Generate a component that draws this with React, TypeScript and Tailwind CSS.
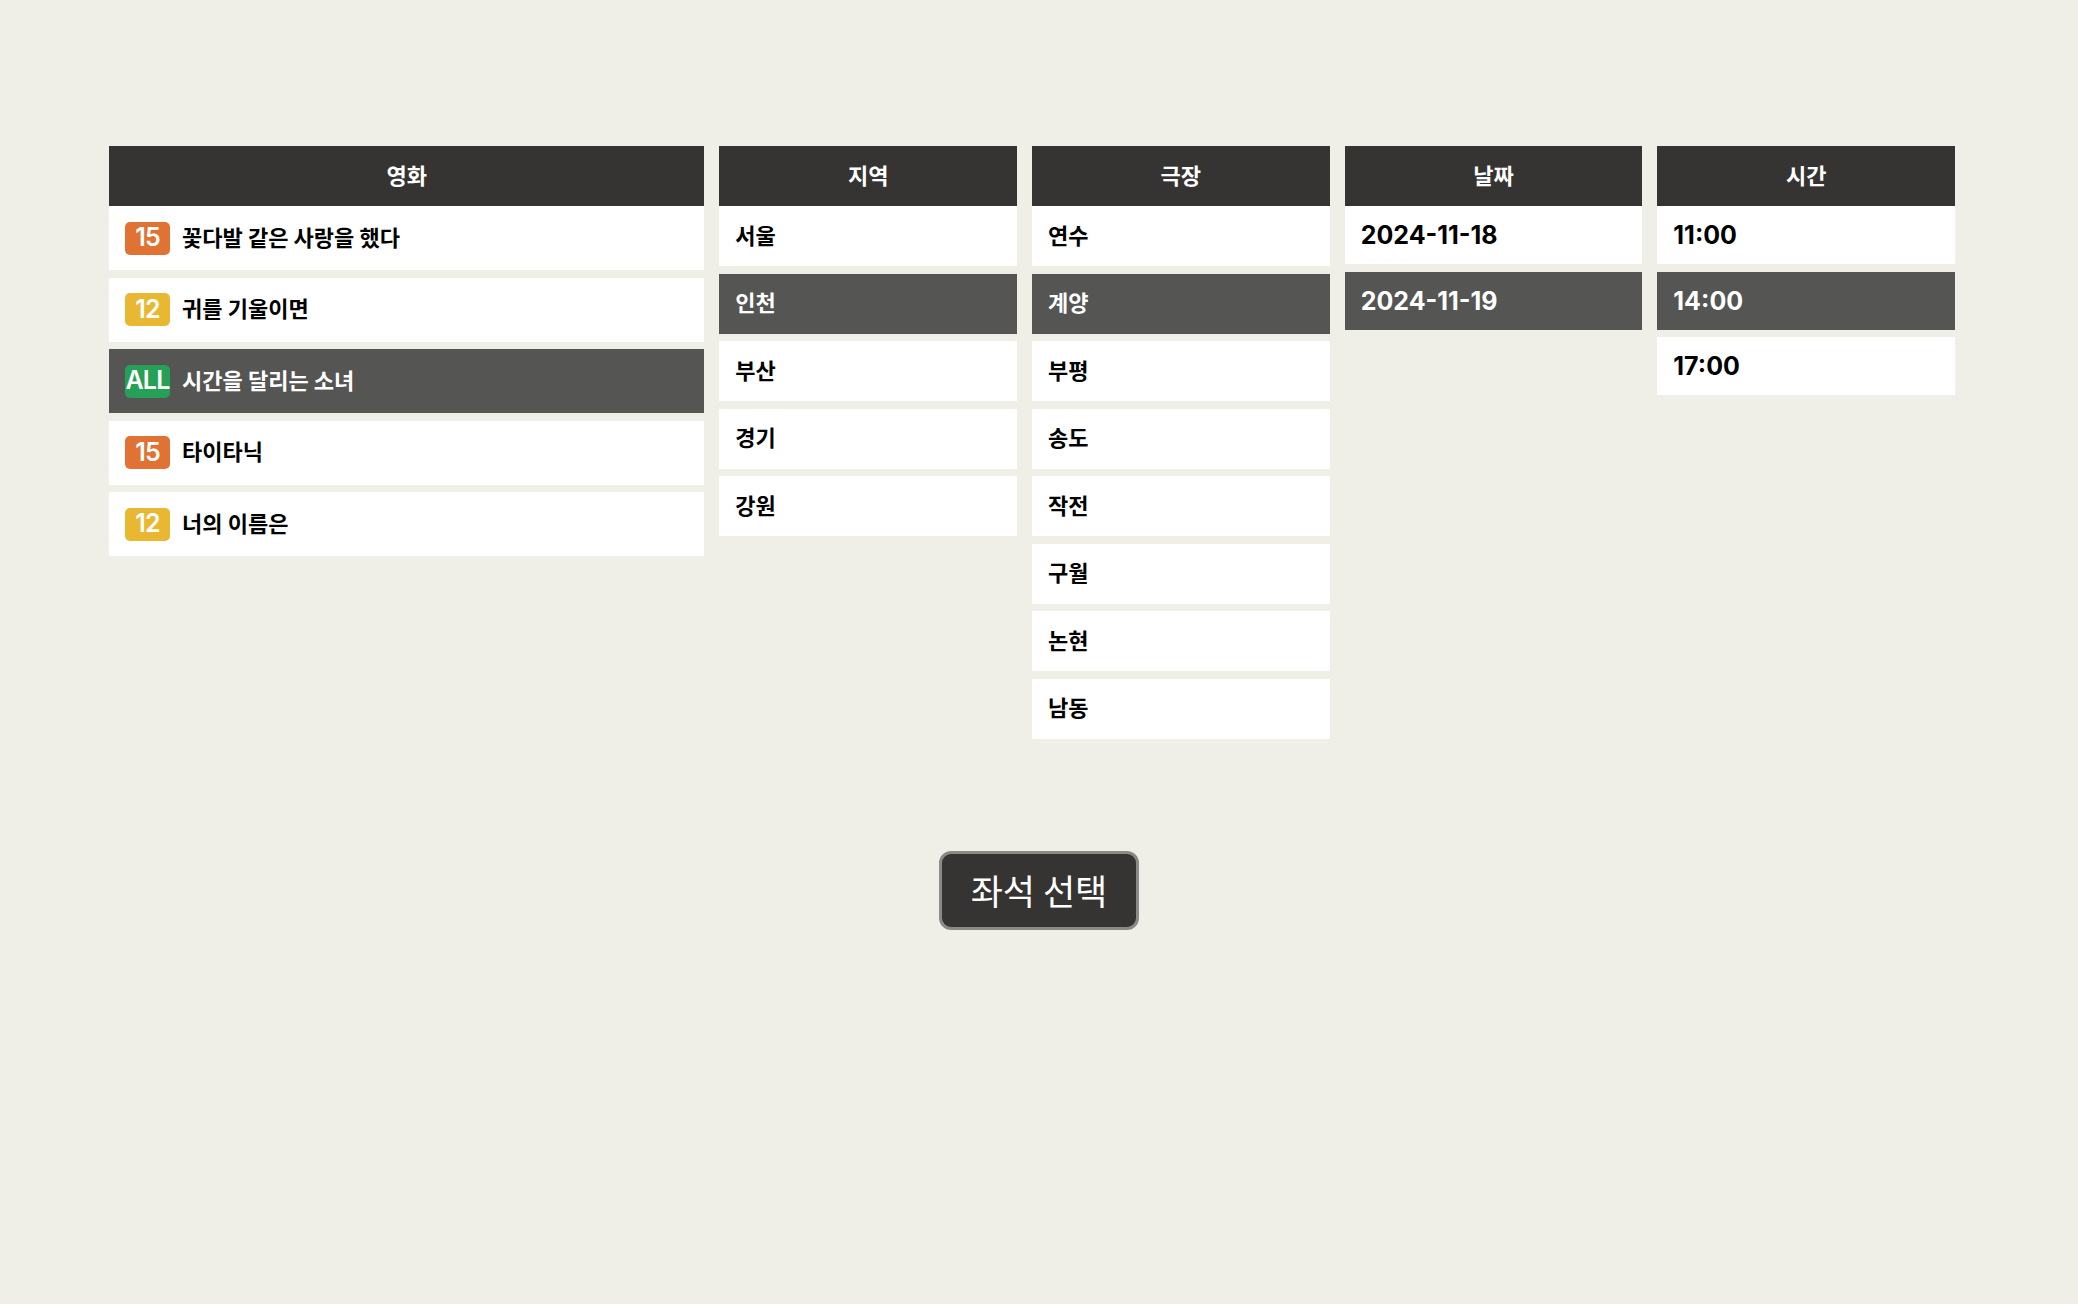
import { useState } from 'react'

type Rating = '15' | '12' | 'ALL'

interface Movie {
  title: string
  rating: Rating
}

const movies: Movie[] = [
  { title: '꽃다발 같은 사랑을 했다', rating: '15' },
  { title: '귀를 기울이면', rating: '12' },
  { title: '시간을 달리는 소녀', rating: 'ALL' },
  { title: '타이타닉', rating: '15' },
  { title: '너의 이름은', rating: '12' },
]

const regions = ['서울', '인천', '부산', '경기', '강원']
const theaters = ['연수', '계양', '부평', '송도', '작전', '구월', '논현', '남동']
const dates = ['2024-11-18', '2024-11-19']
const times = ['11:00', '14:00', '17:00']

const ratingColor: Record<Rating, string> = {
  '15': 'bg-[#e07333]',
  '12': 'bg-[#e9b832]',
  ALL: 'bg-[#25a057]',
}

const font = { fontFamily: 'Inter, "Noto Sans CJK KR", sans-serif' }

function Header({ label }: { label: string }) {
  return (
    <div className="h-[60px] flex items-center justify-center bg-[#353432] text-white text-[22px] font-bold">
      {label}
    </div>
  )
}

function Row({
  selected,
  height,
  onClick,
  children,
}: {
  selected: boolean
  height: string
  onClick: () => void
  children: React.ReactNode
}) {
  return (
    <div
      onClick={onClick}
      className={`${height} flex items-center px-4 cursor-pointer ${
        selected ? 'bg-[#555553] text-white' : 'bg-white text-black'
      }`}
    >
      {children}
    </div>
  )
}

export default function App() {
  const [movie, setMovie] = useState(2)
  const [region, setRegion] = useState(1)
  const [theater, setTheater] = useState(1)
  const [date, setDate] = useState(1)
  const [time, setTime] = useState(1)

  return (
    <div className="min-h-[1304px] bg-[#efeee7]" style={font}>
      <div className="flex gap-[15px] pt-[146px] pl-[109px] pr-[123px] items-start">
        <div className="flex-[2] flex flex-col">
          <Header label="영화" />
          <div className="flex flex-col gap-[7.5px]">
            {movies.map((m, i) => (
              <Row key={m.title} selected={movie === i} height="h-[64px]" onClick={() => setMovie(i)}>
                <span
                  className={`w-[45px] h-[33px] mr-[12px] rounded-[5px] flex items-center justify-center whitespace-nowrap text-white text-[25px] font-semibold tracking-[-0.8px] ${ratingColor[m.rating]}`}
                >
                  {m.rating}
                </span>
                <span className="text-[22px] font-bold">{m.title}</span>
              </Row>
            ))}
          </div>
        </div>

        <div className="flex-1 flex flex-col">
          <Header label="지역" />
          <div className="flex flex-col gap-[7.5px]">
            {regions.map((r, i) => (
              <Row key={r} selected={region === i} height="h-[60px]" onClick={() => setRegion(i)}>
                <span className="text-[22px] font-bold">{r}</span>
              </Row>
            ))}
          </div>
        </div>

        <div className="flex-1 flex flex-col">
          <Header label="극장" />
          <div className="flex flex-col gap-[7.5px]">
            {theaters.map((t, i) => (
              <Row key={t} selected={theater === i} height="h-[60px]" onClick={() => setTheater(i)}>
                <span className="text-[22px] font-bold">{t}</span>
              </Row>
            ))}
          </div>
        </div>

        <div className="flex-1 flex flex-col">
          <Header label="날짜" />
          <div className="flex flex-col gap-[7.5px]">
            {dates.map((d, i) => (
              <Row key={d} selected={date === i} height="h-[58px]" onClick={() => setDate(i)}>
                <span className="text-[25px] font-bold pt-[2px]">{d}</span>
              </Row>
            ))}
          </div>
        </div>

        <div className="flex-1 flex flex-col">
          <Header label="시간" />
          <div className="flex flex-col gap-[7.5px]">
            {times.map((t, i) => (
              <Row key={t} selected={time === i} height="h-[58px]" onClick={() => setTime(i)}>
                <span className="text-[25px] font-bold pt-[2px]">{t}</span>
              </Row>
            ))}
          </div>
        </div>
      </div>

      <div className="flex justify-center mt-[112px]">
        <button
          className="w-[200px] h-[79px] rounded-[12px] border-[3px] border-[#8a8a88] bg-[#353432] text-white text-[35px]"
          style={{ fontFamily: '"Noto Sans CJK KR", sans-serif' }}
        >
          좌석 선택
        </button>
      </div>
    </div>
  )
}
